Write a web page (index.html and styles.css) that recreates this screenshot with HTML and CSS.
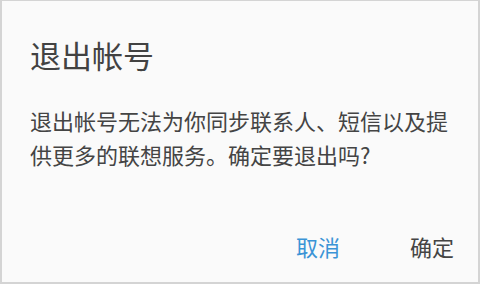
FILE: index.html
```html
<!DOCTYPE html>
<html lang="zh-CN">
<head>
  <meta charset="UTF-8">
  <title>退出帐号</title>
  <link rel="stylesheet" href="styles.css">
</head>
<body>
  <div class="dialog">
    <h1 class="title">退出帐号</h1>
    <p class="message">退出帐号无法为你同步联系人、短信以及提供更多的联想服务。确定要退出吗?</p>
    <div class="actions">
      <button type="button" class="btn cancel">取消</button>
      <button type="button" class="btn confirm">确定</button>
    </div>
  </div>
</body>
</html>
```

FILE: styles.css
```css
html, body {
  margin: 0;
  padding: 0;
}
body {
  font-family: "Noto Sans CJK SC", "Noto Sans", sans-serif;
  background: #fafafa;
}
.dialog {
  box-sizing: border-box;
  width: 480px;
  height: 284px;
  border: 2px solid #d4d4d4;
  border-top-width: 1px;
  background: #fafafa;
  padding: 0 24px 0 28px;
  display: flex;
  flex-direction: column;
}
.title {
  margin: 32px 0 0;
  font-size: 31px;
  font-weight: normal;
  line-height: 44px;
  color: #424242;
}
.message {
  margin: 26px 4px 0 0;
  font-size: 22px;
  line-height: 34px;
  color: #444;
}
.actions {
  margin-top: auto;
  margin-bottom: 20px;
  display: flex;
  justify-content: flex-end;
  gap: 70px;
}
.btn {
  background: none;
  border: none;
  padding: 0;
  font-family: inherit;
  font-size: 22px;
  line-height: 32px;
  cursor: pointer;
}
.cancel {
  color: #3a94d6;
}
.confirm {
  color: #444;
}
```
